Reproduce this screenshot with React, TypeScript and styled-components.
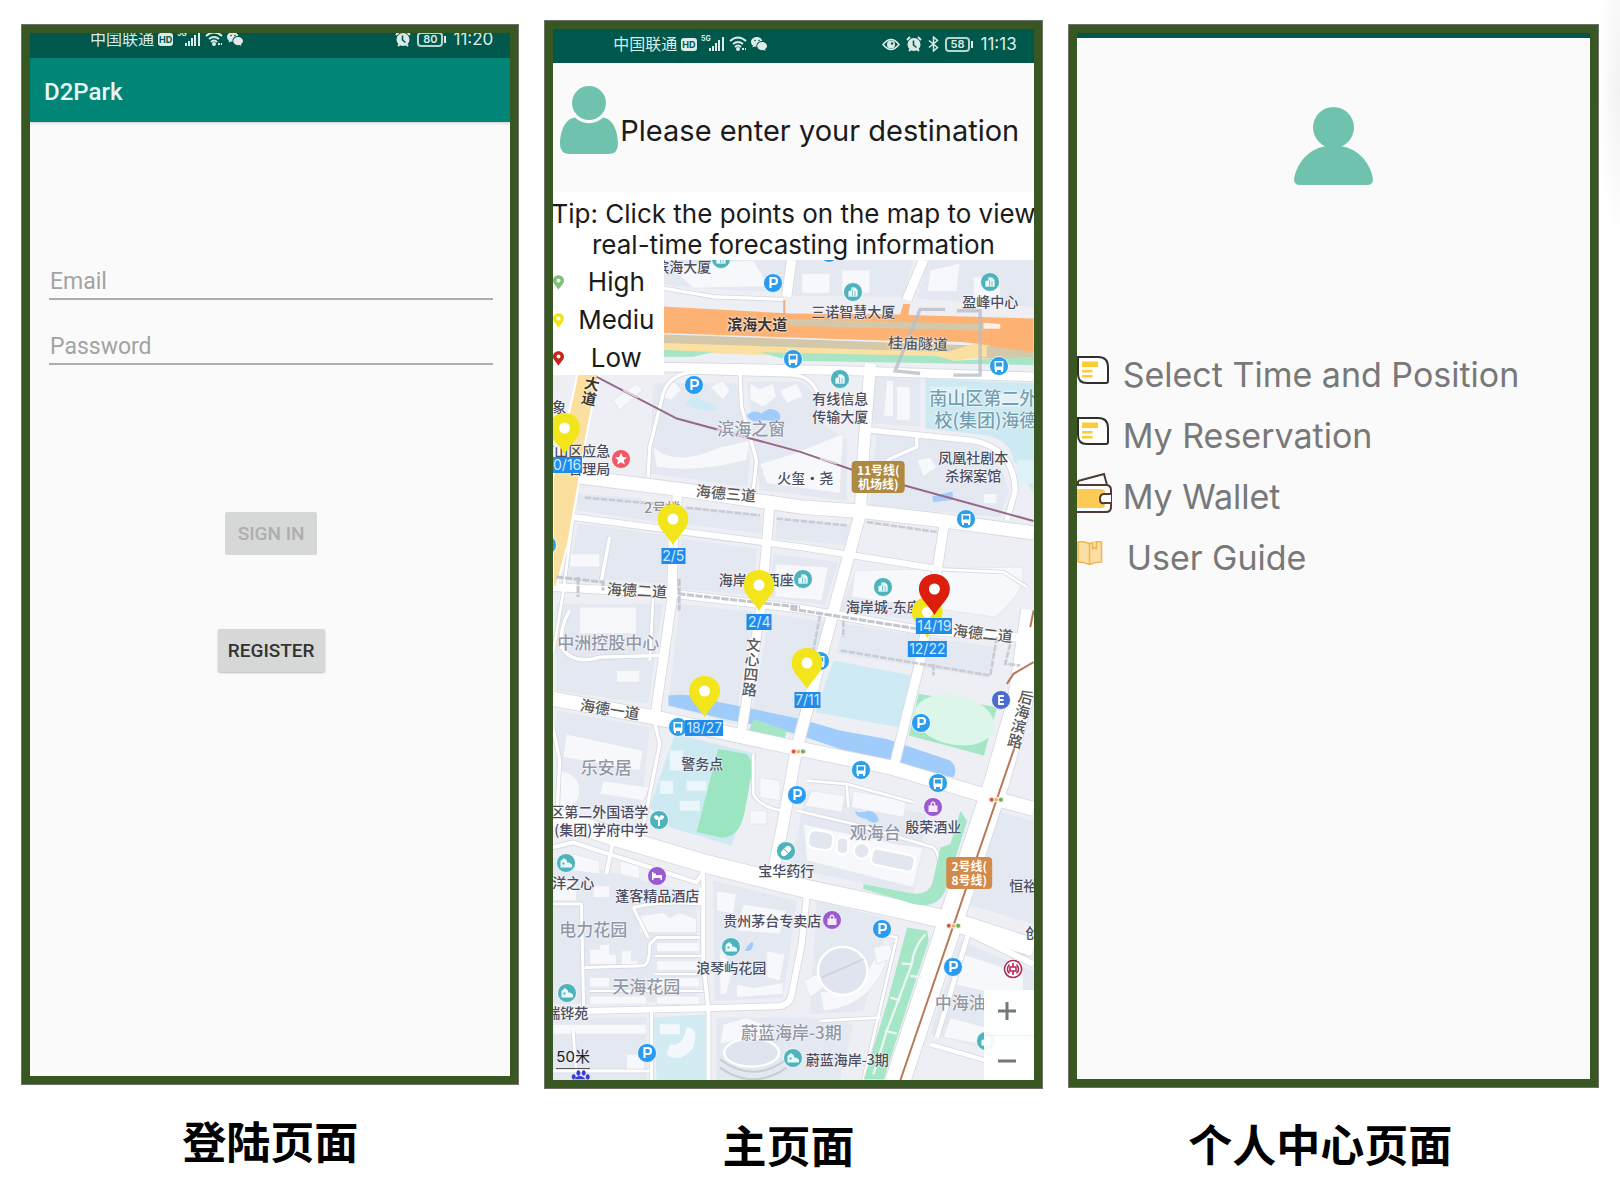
import React from 'react';
import styled, { createGlobalStyle } from 'styled-components';

const latin = `'Inter', 'Noto Sans CJK SC', sans-serif`;
const android = `'Roboto', 'Noto Sans CJK SC', sans-serif`;

const GlobalStyle = createGlobalStyle`
  * { box-sizing: border-box; }
  body {
    margin: 0;
    background: radial-gradient(22px 150px at 100% 90px, #f2f2f2, #fff) no-repeat #fff;
    font-family: ${latin};
  }
  button, input { font-family: inherit; }
`;

/* ---------- page ---------- */

const Page = styled.main`
  display: grid;
  grid-template-columns: 498fr 498fr 531fr;
  column-gap: 25px;
  align-items: start;
  padding: 20px 21px 24px;
`;

const Panel = styled.figure<{ $drop?: boolean }>`
  margin: 0;
  min-width: 0;
  padding-top: ${(p) => (p.$drop ? '4px' : '0')};
`;

const Frame = styled.div`
  display: flex;
  flex-direction: column;
  border: 9px solid #385723;
  outline: 1px solid #6d7367;
  outline-offset: -1px;
  background: #fafafa;
  overflow: hidden;
`;

const Caption = styled.figcaption<{ $inset?: number }>`
  padding: 22px ${(p) => p.$inset || 0}px 0 0;
  font: 700 44px/66px 'Noto Sans CJK SC', sans-serif;
  text-align: center;
  color: #000;
`;

/* ---------- status bar ---------- */

const StatusBar = styled.div<{ $cut?: boolean }>`
  display: flex;
  align-items: flex-end;
  height: ${(p) => (p.$cut ? '25px' : '34px')};
  padding: 0 17px 3px 60px;
  background: #00574b;
  color: #dcebe8;
  overflow: hidden;
`;

const StatusRow = styled.div`
  flex: 1;
  display: flex;
  align-items: center;
  justify-content: space-between;
  height: 32px;
`;

const StatusGroup = styled.div<{ $gap: number }>`
  display: flex;
  align-items: center;
  gap: ${(p) => p.$gap}px;
  font-size: 16px;
  line-height: 24px;
  svg { display: block; flex: none; }
`;

const Clock = styled.time`
  padding-left: 4px;
  font-size: 17px;
`;

const HdBadge = styled.span`
  padding: 0 1px;
  border-radius: 3px;
  background: #dcebe8;
  color: #00574b;
  font-size: 9px;
  font-weight: 700;
  line-height: 13px;
`;

const Battery = styled.span`
  position: relative;
  padding: 0 4px;
  border: 2px solid #b9d3ce;
  border-radius: 4px;
  font-size: 11px;
  font-weight: 600;
  line-height: 11px;
  &::after {
    content: '';
    position: absolute;
    right: -5px;
    top: 2px;
    width: 2px;
    height: 7px;
    background: #dcebe8;
  }
`;

const Signal = () => (
  <svg width="24" height="18" viewBox="0 0 24 18" fill="#dcebe8">
    <text x="0" y="6" fontSize="7" fontWeight="700">5G</text>
    <rect x="8" y="13" width="2" height="3" />
    <rect x="11" y="11" width="2" height="5" />
    <rect x="14" y="8" width="2" height="8" />
    <rect x="17" y="5" width="2" height="11" />
    <rect x="21" y="2" width="2" height="14" />
  </svg>
);

const Wifi = () => (
  <svg width="18" height="16" viewBox="0 0 18 16" fill="none" stroke="#dcebe8" strokeWidth="2">
    <path d="M1 5 Q9 -2 17 5" />
    <path d="M4 8 Q9 4 14 8" />
    <path d="M6 11 Q9 8 12 11" />
    <circle cx="9" cy="13" r="1" />
    <path d="M13 13 h4" strokeDasharray="2 1" />
  </svg>
);

const Chat = () => (
  <svg width="16" height="15" viewBox="0 0 16 15" fill="#dcebe8">
    <path d="M6 0 C2.5 0 0 2.2 0 5 C0 6.6 .8 7.8 2 8.6 L1.5 10.5 L3.8 9.4 L5.5 9.7 C4.9 6.6 7.4 4 11.3 4 C10.7 1.6 8.6 0 6 0Z" />
    <path d="M11 5 C8.200 5 6.200 6.900 6.200 9.100 C6.200 11.400 8.200 13.200 11 13.200 L12.600 13 L14.400 14 L14 12.300 C15.200 11.500 16 10.400 16 9.100 C16 6.900 13.800 5 11 5Z" />
    <circle cx="4" cy="3.500" r=".8" fill="#00574b" />
    <circle cx="8" cy="3.500" r=".8" fill="#00574b" />
  </svg>
);

const Eye = () => (
  <svg width="18" height="13" viewBox="0 0 18 13">
    <path d="M1 6.500 Q9 -3.500 17 6.500 Q9 16.500 1 6.500Z" fill="none" stroke="#dcebe8" strokeWidth="1.600" />
    <circle cx="9" cy="6.500" r="4" fill="#dcebe8" />
    <circle cx="10" cy="5.500" r="1.200" fill="#00574b" />
  </svg>
);

const Alarm = () => (
  <svg width="16" height="16" viewBox="0 0 16 16">
    <circle cx="8" cy="8.500" r="6.500" fill="#dcebe8" />
    <path d="M1 4 L4 1 M15 4 L12 1 M3 15 L5 13 M13 15 L11 13" stroke="#dcebe8" strokeWidth="2" />
    <path d="M7.500 4.500 V9 L10.500 11.500" fill="none" stroke="#00574b" strokeWidth="1.600" />
  </svg>
);

const Bluetooth = () => (
  <svg width="11" height="16" viewBox="0 0 11 16" fill="none" stroke="#dcebe8" strokeWidth="1.500">
    <path d="M1 4.500 L9.500 11.500 L5.500 15 V1 L9.500 4.500 L1 11.500" />
  </svg>
);

function Status({ cut, full, charge, time }: { cut?: boolean; full?: boolean; charge: string; time: string }) {
  return (
    <StatusBar $cut={cut}>
      <StatusRow>
        <StatusGroup $gap={4}>
          中国联通<HdBadge>HD</HdBadge><Signal /><Wifi /><Chat />
        </StatusGroup>
        <StatusGroup $gap={6}>
          {full && <Eye />}
          <Alarm />
          {full && <Bluetooth />}
          <Battery>{charge}</Battery>
          <Clock>{time}</Clock>
        </StatusGroup>
      </StatusRow>
    </StatusBar>
  );
}

/* ---------- login ---------- */

const AppBar = styled.header`
  display: flex;
  align-items: center;
  height: 64px;
  padding: 4px 14px 0;
  background: #008577;
  box-shadow: 0 1px 3px rgba(0, 0, 0, 0.2);
  color: #e9f6f4;
  font: 500 24px/32px ${android};
`;

const LoginForm = styled.form`
  display: flex;
  flex-direction: column;
  align-items: center;
  min-height: 954px;
  padding: 141px 17px 0 19px;
  font-family: ${android};
`;

const Field = styled.input`
  width: 100%;
  height: 37px;
  margin-bottom: 28px;
  padding: 2px 1px 0;
  border: 0;
  border-bottom: 2px solid #adadad;
  background: transparent;
  font-size: 23px;
  outline: none;
  &::placeholder { color: #a3a3a3; opacity: 1; }
`;

const FormButton = styled.button<{ $gap: number }>`
  height: 43px;
  margin-top: ${(p) => p.$gap}px;
  padding: 0 10px;
  min-width: 92px;
  border: 0;
  border-radius: 2px;
  background: #d6d7d7;
  box-shadow: 0 1px 2px rgba(0, 0, 0, 0.25);
  color: #333;
  font-size: 19px;
  font-weight: 500;
  &:disabled { color: #adaeae; box-shadow: none; }
`;

/* ---------- main page ---------- */

const SearchHeader = styled.header`
  display: flex;
  align-items: flex-end;
  gap: 2px;
  height: 129px;
  padding: 0 0 38px 7px;
  svg { flex: none; display: block; }
`;

const Destination = styled.input`
  flex: 1;
  min-width: 0;
  height: 48px;
  padding: 0;
  border: 0;
  background: transparent;
  font-size: 29px;
  outline: none;
  &::placeholder { color: #1b1b1b; opacity: 1; }
`;

const Tip = styled.p`
  margin: 0;
  padding-top: 6px;
  background: #fff;
  color: #1b1b1b;
  font-size: 26px;
  line-height: 31px;
  text-align: center;
  white-space: nowrap;
  display: flex;
  flex-direction: column;
  align-items: center;
`;

const MapArea = styled.section`
  position: relative;
  height: 820px;
  overflow: hidden;
  background: #eeeff5;
`;

const MapDrawing = styled.svg`
  display: block;
  width: 100%;
  height: 100%;
`;

const Legend = styled.ul`
  position: absolute;
  left: 0;
  top: 0;
  width: 111px;
  height: 115px;
  margin: 0;
  padding: 3px 0 0;
  list-style: none;
  background: #fff;
`;

const LegendRow = styled.li`
  display: grid;
  grid-template-columns: 15px 1fr;
  align-items: center;
  height: 38px;
  color: #1b1b1b;
  font-size: 26px;
  line-height: 30px;
  text-align: center;
`;

const tones = {
  poi: { color: '#4c4d60', size: 14, weight: 500 },
  faint: { color: '#8f9098', size: 14, weight: 500 },
  road: { color: '#5a5858', size: 15, weight: 500 },
  highway: { color: '#3d3530', size: 15, weight: 700 },
  area: { color: '#9297a6', size: 17, weight: 500 },
  school: { color: '#729fb2', size: 18, weight: 500 },
};

type Tone = keyof typeof tones;

const Label = styled.span<{ $x: number; $y: number; $tone: Tone; $turn?: number; $upright?: boolean; $end?: boolean }>`
  position: absolute;
  left: ${(p) => p.$x}px;
  top: ${(p) => p.$y}px;
  transform: translate(${(p) => (p.$end ? '-100%' : '-50%')}, -50%) rotate(${(p) => p.$turn || 0}deg);
  color: ${(p) => tones[p.$tone].color};
  font: ${(p) => `${tones[p.$tone].weight} ${tones[p.$tone].size}px/${p.$tone === 'school' ? 22 : 18}px`} 'Noto Sans CJK SC', sans-serif;
  writing-mode: ${(p) => (p.$upright ? 'vertical-rl' : 'horizontal-tb')};
  text-align: ${(p) => (p.$end ? 'right' : 'center')};
  text-shadow: 0 0 2px #fff, 0 0 2px #fff;
  white-space: pre;
`;

const LineBadge = styled.span<{ $x: number; $y: number; $bg: string }>`
  position: absolute;
  left: ${(p) => p.$x}px;
  top: ${(p) => p.$y}px;
  transform: translate(-50%, -50%);
  padding: 2px 5px;
  border-radius: 4px;
  background: ${(p) => p.$bg};
  color: #fff;
  font: 700 12px/14px 'Noto Sans CJK SC', sans-serif;
  text-align: center;
  white-space: pre;
`;

const Marker = styled.button<{ $x: number; $y: number }>`
  position: absolute;
  left: ${(p) => p.$x}px;
  top: ${(p) => p.$y}px;
  transform: translate(-50%, 0);
  display: flex;
  flex-direction: column;
  align-items: center;
  gap: 3px;
  padding: 0;
  border: 0;
  background: none;
  svg { display: block; }
`;

const Count = styled.span`
  padding: 0 1px;
  background: #1f8bea;
  color: #cfe9ff;
  font-size: 14px;
  line-height: 16px;
`;

const ZoomPad = styled.div`
  position: absolute;
  right: 0;
  bottom: 0;
  display: flex;
  flex-direction: column;
  width: 50px;
  background: rgba(255, 255, 255, 0.93);
`;

const ZoomButton = styled.button`
  height: 45px;
  padding: 0 4px 0 0;
  border: 0;
  background: none;
  & + & { border-top: 1px solid #f0f0f0; }
`;

const Scale = styled.span`
  position: absolute;
  left: 3px;
  bottom: 11px;
  border-bottom: 1px solid #555;
  color: #222;
  font-size: 15px;
  line-height: 22px;
`;

const Pin = ({ color, w, h }: { color: string; w: number; h: number }) => (
  <svg width={w} height={h} viewBox="0 0 31 41">
    <path d="M15.500 0 C6.500 0 0 6.700 0 15 C0 25 10 31 15.500 41 C21 31 31 25 31 15 C31 6.700 24.500 0 15.500 0Z" fill={color} />
    <circle cx="15.500" cy="15" r="5.500" fill="#fff" />
  </svg>
);

type Road = [string, number];

const roads: Road[] = [
  ['M0 318 L420 322 L900 332 L1440 350', 26],
  ['M951 310 L931 570 L921 760 L841 1050 L731 1460 L691 1680 L655 1860', 34],
  ['M651 715 L626 1020 L561 1440', 28],
  ['M375 690 L361 810 L356 1020 L306 1365', 28],
  ['M1171 800 L1151 930 L1096 1220 L1021 1520', 28],
  ['M60 770 L360 810 L740 860 L1150 925', 18],
  ['M1120 925 L1350 935 L1420 980', 8],
  ['M0 640 L80 650 L400 690 L741 740 L911 752 L1161 780 L1440 818', 40],
  ['M0 980 L360 1000 L740 1045 L1110 1110 L1440 1135', 24],
  ['M0 1315 L300 1370 L740 1465 L1011 1520 L1311 1610 L1440 1645', 42],
  ['M0 1668 L190 1730 L460 1810 L741 1880 L1041 1945 L1191 1980 L1440 2060', 54],
  ['M1191 1990 L1440 2110', 18],
  ['M1440 1050 L1400 1320 L1331 1560 L1020 2500', 74],
  ['M761 1900 L745 2050 L715 2200 Q710 2235 670 2236 L460 2242 L90 2250 L0 2250', 18],
  ['M450 1830 L450 2100 L466 2250 L466 2457', 12],
  ['M300 1365 L320 1450 L270 1700', 10],
  ['M715 0 L700 110 M1060 120 L1110 0', 28],
  ['M333 85 L480 110 L690 118', 10],
  ['M560 330 L565 440 L610 600 L600 690', 10],
  ['M285 650 L290 560 L330 400 Q350 340 420 336 L720 345 Q790 350 800 430', 10],
  ['M951 510 L1250 540 Q1380 560 1385 690 L1360 780', 16],
  ['M1000 600 L1090 560 L1090 520', 10],
  ['M60 770 L30 1000 L0 1180', 8],
  ['M170 830 L145 960 M50 1050 Q20 1100 25 1160 Q60 1215 140 1190 L320 1185', 10],
  ['M300 1010 L290 1200', 8],
  ['M0 1400 L20 1500 L10 1700', 10],
  ['M0 1760 L60 1745 L430 1865 L450 1835', 12],
  ['M180 1740 L160 1840', 12],
  ['M0 1930 L85 1930 L92 2240', 9],
  ['M95 2120 L270 2115 Q290 2110 290 2050 L310 2030 L440 2030', 9],
  ['M240 1940 Q330 1920 440 1930 L440 1880 M240 1940 L285 2030', 9],
  ['M305 2085 L445 2085 M305 2140 L445 2140 M110 2190 L450 2190', 7],
  ['M295 2250 L295 2457 M0 2430 L290 2430 M60 2310 L70 2430', 9],
  ['M731 1650 L900 1690 L1140 1760 Q1170 1790 1150 1900', 8],
  ['M760 1560 L880 1570 L1080 1625 M880 1570 L885 1640', 8],
  ['M600 1480 L600 1600 Q620 1640 690 1650', 8],
  ['M800 2280 L980 2270 M980 2020 L1030 2030 L930 2457', 8],
  ['M1130 2350 L1440 2440', 12],
  ['M1250 2000 L1150 2330', 14],
];

const blocks = [
  'M333 0 H700 L690 95 L520 90 L333 75Z', 'M730 0 H1080 L1050 110 L720 108Z', 'M1125 0 H1440 V140 L1090 115Z',
  'M300 370 H550 L590 600 L580 680 L290 640Z', 'M580 365 H740 Q790 380 795 480 L880 540 L880 720 L620 690Z',
  'M970 520 L1240 550 Q1340 570 1365 690 L1340 770 L950 735Z', 'M960 340 H1100 V500 L960 490Z',
  'M75 700 L260 715 L350 780 L350 790 L70 750Z', 'M75 790 L340 825 L340 970 L45 950Z', 'M395 740 L625 765 L625 820 L390 790Z',
  'M385 835 L610 865 L600 1005 L375 985Z', 'M670 780 L890 795 L880 855 L665 835Z', 'M660 880 L855 905 L815 1035 L645 1010Z',
  'M900 950 L1120 960 L1100 1080 L860 1050Z', 'M380 1030 L600 1055 L545 1390 L345 1335Z', 'M650 1060 L825 1085 L740 1430 L590 1390Z',
  'M870 1090 L1330 1160 L1300 1250 L850 1180Z', 'M10 1030 L330 1030 L285 1330 L10 1290Z', 'M10 1350 L290 1400 L260 1660 L10 1630Z',
  'M1320 1650 L1440 1680 V1990 L1240 1930Z', 'M0 1790 L430 1900 L430 2220 L0 2230Z', 'M480 1860 L730 1920 L690 2210 L485 2220Z',
  'M790 1920 L1010 1975 L930 2250 L770 2260Z', 'M760 1590 L1120 1660 L1080 1900 L710 1820Z', 'M490 2270 H760 L900 2290 L860 2457 H490Z',
  'M0 2270 H280 V2457 H0Z', 'M1220 2040 L1440 2130 V2400 L1130 2320Z',
];

const houses = [
  'M345 15 L600 0 L650 80 L420 85Z', 'M745 40 H830 V100 H745Z', 'M865 30 H950 V100 H865Z', 'M1130 30 L1220 10 L1210 95 L1120 95Z', 'M1260 50 H1340 V115 H1260Z',
  'M330 380 l35 -15 l20 25 l-30 30 l-35 -10Z', 'M470 380 l40 -20 l20 30 l-20 30Z', 'M590 370 l30 15 l40 -15 l10 40 l-40 30 l-40 -20Z', 'M680 390 l50 -20 l20 40 l-50 20Z',
  'M180 420 l70 -50 l20 20 l-70 60Z', 'M300 560 Q370 620 500 560 L590 540 L580 600 Q430 640 310 620Z', 'M620 610 L720 580 L870 520 L860 700 L640 670Z',
  'M1000 360 h20 v110 h-30Z M1030 380 h40 v100 h-40Z', 'M1090 600 l40 -10 l20 30 l-40 30Z M1290 700 h40 v30 h-40Z',
  'M50 880 h90 v40 h-90Z', 'M80 1040 h170 v80 h-170Z', 'M190 1230 h70 v35 h-70Z', 'M40 1420 l230 50 l-10 60 l-230 -40Z', 'M20 1530 q60 10 60 60 t-60 60Z', 'M150 1560 l140 20 l-20 40 l-130 -20Z',
  'M665 910 l160 10 l-20 100 l-140 -10Z', 'M905 930 l500 -10 q20 70 -80 150 l-430 -60Z',
  'M260 1965 l70 -10 l20 15 l30 -15 l50 20 v40 h-170Z', 'M310 2045 h130 v28 h-130Z M310 2100 h130 v28 h-130Z M110 2150 h60 v28 h-60Z M110 2205 h170 v25 h-170Z M310 2150 h130 v28 h-130Z M310 2205 h130 v25 h-130Z',
  'M110 2065 h30 v-15 h30 v30 h20 v30 h-80Z M205 2070 h30 v30 h20 v20 h-50Z', 'M0 1860 h70 v60 h-70Z', 'M120 1875 h50 v35 h-50Z M200 1800 l60 15 v40 l-60 -15Z', 'M60 1780 l80 20 v40 l-80 -10Z',
  'M490 1890 l60 10 l-10 60 l-50 -10Z', 'M570 1930 l130 20 l-20 70 l-130 -10Z', 'M500 2060 l40 60 l-20 80 l-20 0Z M550 2170 l50 10 l90 -15 v35 l-140 10Z M640 2070 l55 10 l-15 80 l-40 -10Z',
  'M775 1590 l100 15 l-10 50 l-110 -20Z M900 1590 l160 30 l-10 50 l-155 -30Z', 'M750 1690 l280 60 l80 10 l-30 120 l-320 -80Z',
  'M800 2190 q120 10 170 -110 l30 20 q-50 140 -190 150Z', 'M750 2160 l40 -20 l20 40 l-40 30Z M960 2060 l50 -10 l10 40 l-50 20Z',
  'M0 2290 h280 v30 h-280Z', 'M220 2380 h55 v50 h-55Z', 'M510 2290 l70 -20 l100 40 l-180 40Z', 'M1230 2080 l180 60 v80 l-210 -50Z M1190 2270 l150 40 v50 l-170 -30Z', 'M620 1550 l60 10 v60 l-60 -10Z M590 1650 h50 v40 h-50Z',
];

const DistrictDrawing = () => (
  <MapDrawing viewBox="0 0 1440 2457" preserveAspectRatio="xMinYMin slice" aria-hidden="true">
    <rect width="1600" height="2457" fill="#eeeff5" />
    {blocks.map((d) => <path key={d} d={d} fill="#e3e8f1" />)}
    {houses.map((d) => <path key={d} d={d} fill="#f7f8fc" stroke="#e6e8ee" strokeWidth="3" />)}

    <path d="M1116 355 L1440 370 V700 L1380 600 Q1370 540 1300 525 L1116 505Z" fill="#cdeaf2" />
    <path d="M1130 380 h110 v50 h-110Z M1300 400 h110 v40 h-110Z M1390 600 h50 v70 h-50Z" fill="#dff2f7" />
    <path d="M365 1420 L610 1480 L536 1755 L350 1700 L290 1640Z" fill="#cdeaf2" />
    <path d="M350 1470 h40 v60 h-40Z M400 1560 h60 v30 h-60Z M320 1560 h40 v40 h-40Z M380 1620 h60 v30 h-60Z" fill="#eaf6fa" />
    <path d="M495 1465 L580 1480 Q600 1500 595 1540 L575 1650 Q560 1735 500 1730 L430 1715Z" fill="#9be5c1" />
    <path d="M841 1200 L1076 1245 L1036 1400 L786 1355Z" fill="#cdeaf5" />
    <path d="M1096 1300 L1331 1340 L1291 1485 L1066 1425Z" fill="#a5e6c6" />
    <ellipse cx="1203" cy="1378" rx="122" ry="74" transform="rotate(12 1203 1378)" fill="#dcf7ea" />
    <path d="M346 1305 Q420 1295 500 1325 L741 1375 L860 1410 L1000 1435 L1190 1500 Q1215 1520 1200 1550 L1040 1525 L711 1415 L500 1372 L346 1335Z" fill="#a0ccfb" />
    <path d="M601 1375 L701 1410 L690 1445 L581 1425Z" fill="#a5e6c6" />
    <path d="M580 465 q20 -20 45 -5 q25 -25 50 -5 q15 20 -5 30 q-40 -10 -60 0 q-25 -5 -30 -20Z" fill="#a0ccfb" />
    <path d="M395 430 q30 -35 50 -10 q50 10 45 30 q-60 5 -95 -20Z" fill="#cdeaf5" />
    <path d="M1137 708 l60 -14 l2 24 l-60 8Z" fill="#a9cbfa" />
    <path d="M905 1650 q15 10 40 0 q30 5 30 30 q-15 15 -35 -5 q-35 -5 -35 -25Z" fill="#a0ccfb" />
    <path d="M575 2070 q15 -30 25 -25 q0 30 -25 25Z" fill="#a0ccfb" />
    <path d="M301 2270 L460 2260 V2457 H310Z" fill="#d3ecf4" />
    <path d="M320 2290 h60 v30 h-60Z M400 2300 q40 0 20 60 q-40 50 -80 20 l10 -30 q40 10 50 -50Z" fill="#f2f8fb" />

    {roads.map(([d, w]) => <path key={d} d={d} fill="none" stroke="#d6d9e1" strokeWidth={w + 5} strokeLinejoin="round" />)}
    {roads.map(([d, w]) => <path key={d} d={d} fill="none" stroke="#fff" strokeWidth={w} strokeLinejoin="round" />)}
    <ellipse cx="868" cy="2130" rx="74" ry="72" fill="#dfe4ee" stroke="#fff" strokeWidth="7" />
    <path d="M805 2150 L930 2095" stroke="#cdd1da" strokeWidth="5" />
    <ellipse cx="595" cy="2375" rx="82" ry="42" fill="#dfe4ee" stroke="#fff" strokeWidth="7" />
    <path d="M500 2395 Q600 2470 700 2395 M500 2420 Q600 2490 700 2420" fill="none" stroke="#c9ccd2" strokeWidth="6" />
    <g fill="#e2e6ef" stroke="#fff" strokeWidth="7">
      <rect x="770" y="1705" width="75" height="55" rx="20" transform="rotate(10 770 1705)" />
      <rect x="850" y="1730" width="35" height="50" rx="15" />
      <circle cx="925" cy="1770" r="24" />
      <rect x="960" y="1760" width="130" height="50" rx="16" transform="rotate(12 960 1760)" />
    </g>

    <path d="M75 335 L140 335 Q90 560 75 680 L45 850 L10 980 L0 980 V650 Q40 500 75 335Z" fill="#fbdf9f" stroke="#fff" strokeWidth="6" />

    <path d="M300 222 L1440 262 V300 L300 262Z" fill="#d3c8a9" />
    <path d="M300 248 L1180 276 L1300 240 V290 L1200 302 L300 274Z" fill="#fce0a2" />
    <path d="M300 268 L480 276 L420 290 H300Z M620 276 L1150 288 L1200 302 L1440 290 V315 L711 302Z" fill="#a6e5c5" />
    <path d="M300 138 L711 160 L1040 163 L1050 132 H1070 L1065 165 L1440 175 V275 L1330 262 Q1250 240 1100 245 L711 232 L300 218Z" fill="#fdb273" />
    <path d="M705 177 L1290 192 V212 L705 197Z" fill="#d3c8a9" />
    <path d="M1290 188 L1340 192 V206 H1290Z" fill="#fff" fillOpacity=".8" />
    <path d="M693 120 V165" stroke="#e9ad83" strokeWidth="6" />
    <path d="M1175 148 L1100 148 L1025 332 L1100 340 M1210 152 H1280 V345 H1200" fill="none" stroke="#b9bdc8" strokeOpacity=".8" strokeWidth="10" />

    <path d="M10 950 L150 965 L150 990 M75 950 V1010 M378 955 V1050 M375 1000 L740 1040 M711 1045 L1110 1108" fill="none" stroke="#c3c6d0" strokeWidth="9" strokeDasharray="22 4" />
    <path d="M800 1065 L780 1170 M870 1080 V1130 M862 1170 L1100 1210 L1310 1245 L1330 1130 M1370 1150 L1355 1210 L1400 1215 M1140 1210 V1245 M95 712 L360 735 M400 742 L620 765 M670 775 L880 795 M940 785 L1150 815" fill="none" stroke="#c9ccd5" strokeWidth="8" strokeDasharray="20 4" />

    <path d="M1221 1650 L1241 1680 L1175 1890 Q1150 1945 1080 1930 L930 1885 V1870 L1060 1895 Q1120 1910 1136 1870 L1161 1760 L1191 1750Z" fill="#a5e6c6" />
    <path d="M1061 2000 L1121 2010 L1126 2040 L1060 2240 L991 2455 H931 L1000 2230Z" fill="#a5e6c6" />
    <path d="M1115 2020 Q1080 2060 1075 2110 L1000 2310 L960 2440 M1045 2108 l30 2 M1070 2145 l35 5 M1010 2210 l30 8 M995 2310 l35 8" fill="none" stroke="#e9f7f0" strokeWidth="7" />

    <path d="M131 350 L371 475 L741 575 L901 630 L1051 675 L1440 782" fill="none" stroke="#96688a" strokeWidth="6" />
    <path d="M210 390 L255 412 M490 508 L580 532 M800 595 L850 610" stroke="#d9cddb" strokeWidth="6" />
    <path d="M1386 1450 L1041 2457" stroke="#fff" strokeWidth="12" />
    <path d="M1390 1440 L1041 2457 M1430 1100 L1440 1050 M1360 1270 L1380 1240 L1440 1205" fill="none" stroke="#b9795a" strokeWidth="6" />
    <g>
      {[[735, 1473], [1328, 1617], [1200, 1995]].map(([x, y]) => (
        <g key={x}>
          <rect x={x - 23} y={y - 8} width="46" height="16" rx="4" fill="#f2ece0" />
          <circle cx={x - 14} cy={y} r="6" fill="#e1524c" />
          <circle cx={x} cy={y} r="5" fill="#e8b14e" />
          <circle cx={x + 14} cy={y} r="6" fill="#6cae5e" />
        </g>
      ))}
    </g>
    <path d="M62 2455 q18 -22 36 0Z M62 2440 a6 8 0 1 0 .1 0 M76 2428 a6 8 0 1 0 .1 0 M92 2428 a6 8 0 1 0 .1 0 M104 2440 a6 8 0 1 0 .1 0" fill="#3a3adb" />
  </MapDrawing>
);

type Kind = 'P' | 'bus' | 'building' | 'villa' | 'tree' | 'pill' | 'star' | 'bed' | 'bag' | 'E' | 'bank';

const dots: Record<Kind, { bg: string; glyph: React.ReactNode }> = {
  P: { bg: '#2a9bf0', glyph: <path d="M7.500 15 V5 H11 a3 3 0 0 1 0 6 H7.500" fill="none" stroke="#fff" strokeWidth="2.200" /> },
  bus: { bg: '#2b9fe8', glyph: <path d="M5.500 5 h9 v9 h-9Z M7 6.500 v4 h6 v-4Z M6 14 h2 v2 h-2Z M12 14 h2 v2 h-2Z" fill="#fff" fillRule="evenodd" /> },
  building: { bg: '#4eb3bd', glyph: <path d="M5 15 V9 L8 8 V5 h4 l3 3 v7Z M9.500 8 v6 M12 9 v5" fill="#e9f8f9" stroke="#4eb3bd" strokeWidth=".7" /> },
  villa: { bg: '#4eb3bd', glyph: <path d="M4.500 14.500 V8 L8 5 L11 7.500 V9.500 h2 l3 2 v3Z M6.500 9.500 h2 v2 h-2Z" fill="#e9f8f9" fillRule="evenodd" /> },
  tree: { bg: '#4eb3bd', glyph: <path d="M9 16 V10 Q5 10 5 6 Q9 4 10 8 Q11 4 15 6 Q15 10 11 10 V16Z" fill="#fff" /> },
  pill: { bg: '#4eb3bd', glyph: <g transform="rotate(45 10 10)"><rect x="7" y="4" width="6" height="12" rx="3" fill="#fff" /><path d="M7.500 10 h5" stroke="#4eb3bd" /></g> },
  star: { bg: '#ef5a68', glyph: <path d="M10 4 L11.800 8 L16 8.400 L12.800 11.200 L13.800 15.500 L10 13.200 L6.200 15.500 L7.200 11.200 L4 8.400 L8.200 8Z" fill="#fff" /> },
  bed: { bg: '#9b5bd0', glyph: <path d="M5 6 v8 h1.500 v-2 h7 v2 H15 V9 h-6 V7.500 H6.500 V6Z" fill="#fff" /> },
  bag: { bg: '#9b5bd0', glyph: <path d="M5.500 8.500 h9 v6.500 h-9Z M7.500 8 Q7.500 4.500 10 4.500 T12.500 8 V9 H11.200 V8 Q11.200 6 10 6 T8.800 8 V9 H7.500Z" fill="#f4eafb" /> },
  E: { bg: '#4a6bd0', glyph: <path d="M13 6 H8 V14 H13 M8 10 h4.500" fill="none" stroke="#fff" strokeWidth="1.800" /> },
  bank: { bg: '#fff', glyph: <path d="M10 1.500 a8.500 8.500 0 1 0 .1 0Z M10 4 v4 M10 12 v4 M7 8 h6 v4 h-6Z M13.500 5.500 a6 6 0 0 1 0 9 M6.500 5.500 a6 6 0 0 0 0 9" fill="none" stroke="#b02a55" strokeWidth="1.600" /> },
};

const Dot = styled.svg<{ $x: number; $y: number }>`
  position: absolute;
  left: ${(p) => p.$x}px;
  top: ${(p) => p.$y}px;
  transform: translate(-50%, -50%);
`;

const places: [Kind, number, number][] = [
  ['P', 220, 23], ['P', 141, 125], ['P', 368, 463], ['P', 244, 535], ['P', 329, 669], ['P', 400, 707], ['P', 94, 793],
  ['bus', 240, 99], ['bus', 446, 106], ['bus', 413, 259], ['bus', 125, 467], ['bus', 267, 401], ['bus', 308, 510], ['bus', 385, 523], ['bus', -6, 285],
  ['building', 168, -1], ['bus', 276, -7], ['building', 300, 32], ['building', 437, 22], ['building', 287, 119], ['building', 250, 319], ['building', 330, 327],
  ['villa', 13, 603], ['villa', 14, 733], ['villa', 178, 687], ['villa', 240, 798], ['building', 433, 781],
  ['tree', 106, 560], ['pill', 233, 591], ['star', 68, 199], ['bed', 104, 616], ['bag', 380, 547], ['bag', 279, 660], ['E', 448, 440], ['bank', 460, 709],
];

type LabelData = { text: string; x: number; y: number; tone?: Tone; turn?: number; upright?: boolean; end?: boolean };

const labels: LabelData[] = [
  { text: '滨海大厦', x: 158, y: 6, end: true },
  { text: '三诺智慧大厦', x: 300, y: 51 },
  { text: '盈峰中心', x: 437, y: 41 },
  { text: '滨海大道', x: 204, y: 64, tone: 'highway' },
  { text: '桂庙隧道', x: 365, y: 83, tone: 'road', turn: 2 },
  { text: '大道', x: 37, y: 131, tone: 'highway', turn: 12, upright: true },
  { text: '象', x: 6, y: 146 },
  { text: '南山区应急\n管理局', x: 57, y: 199, end: true },
  { text: '有线信息\n传输大厦', x: 287, y: 147 },
  { text: '南山区第二外\n校(集团)海德', x: 484, y: 148, tone: 'school', end: true },
  { text: '滨海之窗', x: 198, y: 168, tone: 'area' },
  { text: '凤凰社剧本\n杀探案馆', x: 420, y: 206 },
  { text: '火玺·尧', x: 252, y: 217 },
  { text: '海德三道', x: 173, y: 233, tone: 'road', turn: 5 },
  { text: '2号楼', x: 109, y: 247, tone: 'faint' },
  { text: '海岸城-西座', x: 203, y: 319 },
  { text: '海岸城-东座', x: 330, y: 346 },
  { text: '海德二道', x: 84, y: 330, tone: 'road', turn: 3 },
  { text: '海德二道', x: 430, y: 373, tone: 'road', turn: 6 },
  { text: '中洲控股中心', x: 55, y: 382, tone: 'area' },
  { text: '文心四路', x: 198, y: 407, tone: 'road', turn: 5, upright: true },
  { text: '海德一道', x: 57, y: 449, tone: 'road', turn: 9 },
  { text: '乐安居', x: 53, y: 507, tone: 'area' },
  { text: '警务点', x: 149, y: 503 },
  { text: '后海滨路', x: 467, y: 459, tone: 'road', turn: 14, upright: true },
  { text: '区第二外国语学\n(集团)学府中学', x: 95, y: 560, end: true },
  { text: '洋之心', x: 20, y: 622 },
  { text: '蓬客精品酒店', x: 104, y: 635 },
  { text: '宝华药行', x: 233, y: 610 },
  { text: '观海台', x: 322, y: 572, tone: 'area' },
  { text: '殷荣酒业', x: 380, y: 566 },
  { text: '恒裕', x: 470, y: 625 },
  { text: '贵州茅台专卖店', x: 219, y: 660 },
  { text: '电力花园', x: 40, y: 669, tone: 'area' },
  { text: '浪琴屿花园', x: 178, y: 707 },
  { text: '天海花园', x: 93, y: 726, tone: 'area' },
  { text: '瑞铧苑', x: 14, y: 752 },
  { text: '蔚蓝海岸-3期', x: 238, y: 772, tone: 'area' },
  { text: '蔚蓝海岸-3期', x: 294, y: 799 },
  { text: '中海油', x: 407, y: 742, tone: 'area' },
  { text: '创', x: 479, y: 672 },
];

const yellow = '#f2e51b';
const red = '#dc1e0c';

const lots = [
  { count: '10/16', x: 11, y: 153, color: yellow },
  { count: '2/5', x: 120, y: 244, color: yellow },
  { count: '2/4', x: 206, y: 310, color: yellow },
  { count: '18/27', x: 151, y: 416, color: yellow },
  { count: '7/11', x: 254, y: 388, color: yellow },
  { count: '12/22', x: 374, y: 337, color: yellow },
  { count: '14/19', x: 381, y: 314, color: red },
];

const levels = [
  { name: 'High', color: '#7fbf7a' },
  { name: 'Mediu', color: yellow },
  { name: 'Low', color: '#c9221a' },
];

const PersonBust = () => (
  <svg width="58" height="68" viewBox="0 0 58 68" fill="#6fc3ae" role="img" aria-label="Profile">
    <circle cx="29" cy="17" r="17" />
    <path d="M15 31.500 A20 20 0 0 0 43 31.500 C54 33 58 47 58 58 Q58 68 48 68 H10 Q0 68 0 58 C0 47 4 33 15 31.500Z" />
  </svg>
);

function ParkingMap() {
  return (
    <MapArea aria-label="Parking map">
      <DistrictDrawing />
      {places.map(([kind, x, y]) => (
        <Dot key={`${kind}${x}${y}`} $x={x} $y={y} width="20" height="20" viewBox="0 0 20 20">
          <circle cx="10" cy="10" r="9.500" fill={dots[kind].bg} stroke="#fff" strokeWidth=".8" />
          {dots[kind].glyph}
        </Dot>
      ))}
      {labels.map((l) => (
        <Label key={`${l.text}${l.y}`} $x={l.x} $y={l.y} $tone={l.tone || 'poi'} $turn={l.turn} $upright={l.upright} $end={l.end}>
          {l.text}
        </Label>
      ))}
      <LineBadge $x={325} $y={217} $bg="#ae8a40">{'11号线(\n机场线)'}</LineBadge>
      <LineBadge $x={416} $y={613} $bg="#d28a48">{'2号线(\n8号线)'}</LineBadge>
      {lots.map((lot) => (
        <Marker key={lot.count} type="button" $x={lot.x} $y={lot.y}>
          <Pin color={lot.color} w={31} h={41} />
          <Count>{lot.count}</Count>
        </Marker>
      ))}
      <Legend>
        {levels.map((level) => (
          <LegendRow key={level.name}>
            <Pin color={level.color} w={11} h={15} />
            {level.name}
          </LegendRow>
        ))}
      </Legend>
      <Scale>50米</Scale>
      <ZoomPad>
        <ZoomButton type="button" aria-label="Zoom in">
          <svg width="20" height="20" viewBox="0 0 20 20"><path d="M10 1 V19 M1 10 H19" stroke="#777" strokeWidth="3" /></svg>
        </ZoomButton>
        <ZoomButton type="button" aria-label="Zoom out">
          <svg width="20" height="20" viewBox="0 0 20 20"><path d="M1 14 H19" stroke="#777" strokeWidth="3" /></svg>
        </ZoomButton>
      </ZoomPad>
    </MapArea>
  );
}

/* ---------- personal centre ---------- */

const Profile = styled.section`
  display: flex;
  flex-direction: column;
  min-height: 1046px;
  padding-top: 69px;
  border-top: 5px solid #00574b;
`;

const Avatar = styled.svg`
  display: block;
  align-self: center;
  margin-bottom: 157px;
`;

const Menu = styled.nav`
  display: flex;
  flex-direction: column;
`;

const MenuLink = styled.a<{ $indent?: boolean }>`
  display: grid;
  grid-template-columns: ${(p) => (p.$indent ? '50px' : '46px')} 1fr;
  align-items: center;
  height: 61px;
  color: #787878;
  font-size: 34px;
  line-height: 44px;
  text-decoration: none;
  svg { display: block; margin-bottom: 5px; }
  span { padding-top: 4px; }
`;

const Ticket = () => (
  <svg width="32" height="28" viewBox="0 0 32 28">
    <path d="M1 1 H21 Q31 1 31 11 V25 Q31 27 29 27 H10 Q1 27 1 18Z" fill="#fff" stroke="#2f2f33" strokeWidth="2" />
    <path d="M5 5.500 H21 V11 H5Z M5 14 H15.500 V16.500 H5Z M5 19 H15.500 V21.500 H5Z" fill="#fdcb35" />
  </svg>
);

const Wallet = () => (
  <svg width="35" height="41" viewBox="0 0 35 41" fill="none" stroke="#4f3a36" strokeWidth="2">
    <path d="M1 9 L27 2 L30 13" fill="#fff" />
    <path d="M1 9 V13 H30 Q34 14 34 18 V35 Q34 40 29 40 H0" fill="#fff" />
    <path d="M0 17 H24 Q28 17 28 20 V33 Q28 36 25 36 H0Z" fill="#fdc955" stroke="none" />
    <path d="M34 22 H27 Q23 22 23 27 T27 31 H34" fill="#fff" />
  </svg>
);

const Book = () => (
  <svg width="26" height="26" viewBox="0 0 26 26" fill="#fbdfa5" stroke="#efb44f" strokeWidth="1.500" strokeLinejoin="round">
    <path d="M1 2 Q7 1 12.500 3.500 Q19 1 24.500 2 V22 Q18 22 12.500 24.500 Q7 22 1 22Z" />
    <path d="M12.500 3.500 V24" />
    <path d="M15.500 2 V9 L17.500 7.500 L19.500 9 V1.500" />
  </svg>
);

const entries = [
  { name: 'Select Time and Position', icon: <Ticket /> },
  { name: 'My Reservation', icon: <Ticket /> },
  { name: 'My Wallet', icon: <Wallet /> },
  { name: 'User Guide', icon: <Book />, indent: true },
];

/* ---------- app ---------- */

export default function App() {
  return (
    <>
      <GlobalStyle />
      <Page>
        <Panel $drop>
          <Frame>
            <Status cut charge="80" time="11:20" />
            <AppBar>D2Park</AppBar>
            <LoginForm>
              <Field type="email" placeholder="Email" aria-label="Email" />
              <Field type="password" placeholder="Password" aria-label="Password" />
              <FormButton type="submit" disabled $gap={119}>SIGN IN</FormButton>
              <FormButton type="button" $gap={74}>REGISTER</FormButton>
            </LoginForm>
          </Frame>
          <Caption>登陆页面</Caption>
        </Panel>

        <Panel>
          <Frame>
            <Status full charge="58" time="11:13" />
            <SearchHeader>
              <PersonBust />
              <Destination type="text" placeholder="Please enter your destination" aria-label="Destination" />
            </SearchHeader>
            <Tip>
              <span>Tip: Click the points on the map to view</span>
              <span>real-time forecasting information</span>
            </Tip>
            <ParkingMap />
          </Frame>
          <Caption $inset={10}>主页面</Caption>
        </Panel>

        <Panel $drop>
          <Frame>
            <Profile>
              <Avatar width="79" height="78" viewBox="0 0 79 78" fill="#6fc3ae">
                <circle cx="39.500" cy="20.500" r="20.500" />
                <path d="M32 39 H47 C64 42 76 55 79 72 Q79 78 73 78 H6 Q0 78 0 72 C3 55 15 42 32 39Z" />
              </Avatar>
              <Menu>
                {entries.map((e) => (
                  <MenuLink key={e.name} href="#" $indent={e.indent}>
                    {e.icon}
                    <span>{e.name}</span>
                  </MenuLink>
                ))}
              </Menu>
            </Profile>
          </Frame>
          <Caption $inset={26}>个人中心页面</Caption>
        </Panel>
      </Page>
    </>
  );
}
